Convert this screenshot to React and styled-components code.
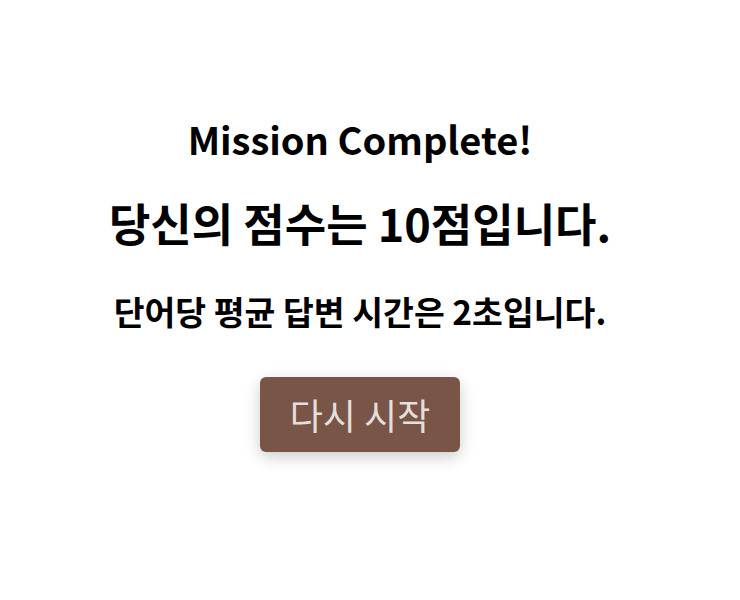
import styled, { createGlobalStyle } from "styled-components";

const GlobalStyle = createGlobalStyle`
    body {
        margin: 0;
        background: #ffffff;
        font-family: "Noto Sans CJK KR", "Noto Sans", sans-serif;
    }
`;

const App = () => {
    return (
        <>
            <GlobalStyle />
            <Container>
                <Title>Mission Complete!</Title>
                <Score>당신의 점수는 10점입니다.</Score>
                <Average>단어당 평균 답변 시간은 2초입니다.</Average>
                <RestartButton>다시 시작</RestartButton>
            </Container>
        </>
    );
};
export default App;

const Container = styled.div`
    width: 720px;
    height: 600px;
    display: flex;
    flex-direction: column;
    align-items: center;
    padding-top: 116px;
    box-sizing: border-box;
`;
const Title = styled.h1`
    margin: 0;
    font-size: 38px;
    font-weight: 700;
    color: #000;
    line-height: 1.2;
`;
const Score = styled.h2`
    margin: 34px 0 0;
    font-size: 45px;
    font-weight: 700;
    color: #000;
    line-height: 1.2;
`;
const Average = styled.p`
    margin: 41px 0 0;
    font-size: 33.5px;
    font-weight: 700;
    color: #000;
    line-height: 1.2;
`;
const RestartButton = styled.button`
    margin-top: 46px;
    width: 200px;
    height: 75px;
    border: none;
    border-radius: 6px;
    background: #795548;
    color: #e3dfdc;
    font-family: inherit;
    font-size: 36px;
    box-shadow: 0 5px 16px rgba(0, 0, 0, 0.2);
    cursor: pointer;
`;
